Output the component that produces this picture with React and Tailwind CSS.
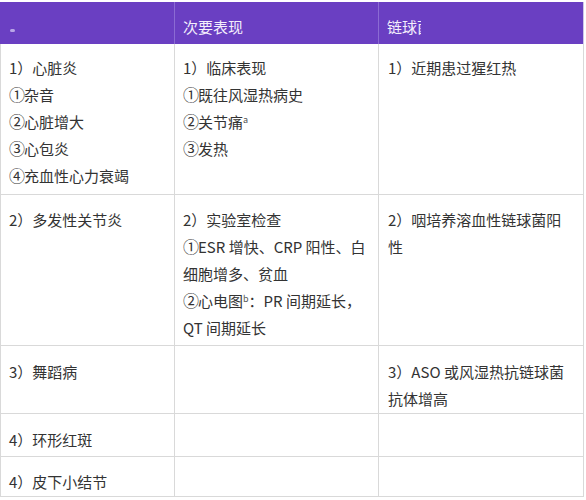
import React from "react";

const font = { fontFamily: '"Noto Sans CJK SC", "Noto Sans", sans-serif' };

function Cell({ children, className = "", first = false }) {
  return (
    <div
      className={`border-b border-r border-[#d9d9d9] pl-[8px] pr-[4px] text-[15px] leading-[27px] text-[#333333] ${first ? "border-l" : ""} ${className}`}
    >
      {children}
    </div>
  );
}

function Sup({ children }) {
  return <span className="relative -top-[5px] text-[9px] leading-none text-[#555]">{children}</span>;
}

function C({ children }) {
  return <span className="inline-block w-[15px] text-[16px] leading-[27px] text-center">{children}</span>;
}

export default function App() {
  const cols = "grid grid-cols-[175px_204px_205px]";
  return (
    <div className="w-[586px] h-[500px] bg-white pt-[2px]" style={font}>
      <div className={`${cols} h-[42px]`}>
        <div className="relative bg-[#6a3fc2] border-r border-[#8b6bd3]">
          <span className="absolute left-[10px] top-[27px] w-[5px] h-[3px] rounded-full bg-[#b9a6e6]"></span>
        </div>
        <div className="bg-[#6a3fc2] border-r border-[#8b6bd3] pl-[8px] pt-[11px] text-[15px] leading-[27px] text-[#f3eefc]">
          次要表现
        </div>
        <div className="bg-[#6a3fc2] border-r border-[#cfc6e6] pl-[8px] pt-[11px] text-[15px] leading-[27px] text-[#f3eefc] flex">
          <span>链球</span>
          <span className="inline-block w-[4px] overflow-hidden whitespace-nowrap">菌</span>
        </div>
      </div>

      <div className={`${cols} h-[151px]`}>
        <Cell first className="pt-[10px]">
          <div>1）心脏炎</div>
          <div><C>①</C>杂音</div>
          <div><C>②</C>心脏增大</div>
          <div><C>③</C>心包炎</div>
          <div><C>④</C>充血性心力衰竭</div>
        </Cell>
        <Cell className="pt-[10px]">
          <div>1）临床表现</div>
          <div><C>①</C>既往风湿热病史</div>
          <div>
            <C>②</C>关节痛<Sup>a</Sup>
          </div>
          <div><C>③</C>发热</div>
        </Cell>
        <Cell className="pt-[10px] pl-[9px]">
          <div>1）近期患过猩红热</div>
        </Cell>
      </div>

      <div className={`${cols} h-[151px]`}>
        <Cell first className="pt-[11px]">
          <div>2）多发性关节炎</div>
        </Cell>
        <Cell className="pt-[11px]">
          <div>2）实验室检查</div>
          <div className="whitespace-nowrap"><C>①</C>ESR 增快、CRP 阳性、白</div>
          <div>细胞增多、贫血</div>
          <div className="whitespace-nowrap">
            <C>②</C>心电图<Sup>b</Sup>：PR 间期延长，
          </div>
          <div>QT 间期延长</div>
        </Cell>
        <Cell className="pt-[11px] pl-[9px]">
          <div className="whitespace-nowrap">2）咽培养溶血性链球菌阳</div>
          <div>性</div>
        </Cell>
      </div>

      <div className={`${cols} h-[68px]`}>
        <Cell first className="pt-[12px]">
          <div>3）舞蹈病</div>
        </Cell>
        <Cell className="pt-[12px]"></Cell>
        <Cell className="pt-[12px] pl-[9px]">
          <div className="whitespace-nowrap">3）ASO 或风湿热抗链球菌</div>
          <div>抗体增高</div>
        </Cell>
      </div>

      <div className={`${cols} h-[43px]`}>
        <Cell first className="pt-[12px]">
          <div>4）环形红斑</div>
        </Cell>
        <Cell></Cell>
        <Cell></Cell>
      </div>

      <div className={`${cols} h-[40px]`}>
        <Cell first className="pt-[11px]">
          <div>4）皮下小结节</div>
        </Cell>
        <Cell></Cell>
        <Cell></Cell>
      </div>
    </div>
  );
}
